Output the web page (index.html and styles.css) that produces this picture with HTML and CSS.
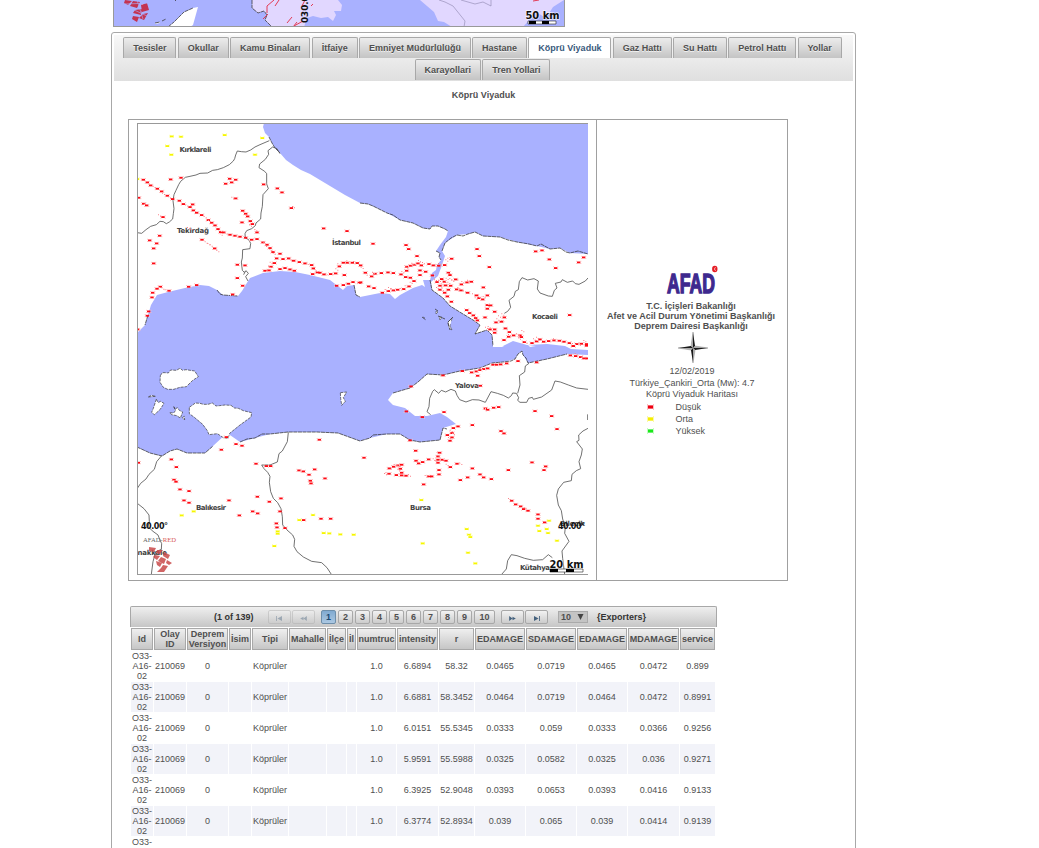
FILE: index.html
```html
<!DOCTYPE html>
<html lang="tr">
<head>
<meta charset="utf-8">
<title>AFAD-RED</title>
<link rel="stylesheet" href="styles.css">
</head>
<body>
<svg class="overview" viewBox="114 0 450 26">
  <rect class="sea" x="113" y="0" width="452" height="27"/>
  <path class="risk" d="M252 0 252 8 258 13 264 11 267 15 265 20 270 25 272 27 304 27 307 18 313 16 321 18 328 17 333 21 336 15 334 11 341 11 342 5 338 0ZM420 0 434 12 438 21 444 22 452 27 523 27 536 12 546 18 553 7 564 0Z"/>
  <path class="land" d="M168 27 174 22 184 12 193 8 198 7 193 25 190 27ZM155 23 160 22 160 23 155 24ZM142 4 146 5 146 10 143 9Z"/>
  <path class="coast" d="M168 27 174 22 184 12 193 8M155 23 160 22M162 21 166 19M175 0 176 1M252 0 252 8 258 13 264 11 267 15 265 20 270 25 272 27"/>
  <path class="thin" d="M439 0 445 2 453 6 465 21 464 27M461 0 475 4 483 2 491 6 491 0"/>
  <path class="fault" d="M274 0 267 6 267 13M268 14 263 19M287 23 292 17M294 26 303 21M305 0 302 6M311 6 313 4M279 0 275 6M533 1 539 0M297 22 293 27" />
  <g class="emblem"><path d="M125 0 132 1 128 5 124 3ZM133 1 140 2 137 8 130 6ZM141 5 147 3 149 10 142 12ZM135 10 142 9 141 15 133 13ZM143 14 148 13 144 20 139 18ZM133 16 139 17 137 22 132 19Z"/></g>
  <path class="gridline" d="M125 4 150 3M132 9 147 16M137 0 143 19"/>
  <text class="axis" transform="translate(308 23) rotate(-90)" textLength="38" lengthAdjust="spacingAndGlyphs">030.00°</text>
  <text class="scale" x="525.500" y="19" textLength="34" lengthAdjust="spacingAndGlyphs">50 km</text>
  <path class="bar" d="M528 21h28v3h-28z"/><path class="barfill" d="M529 21h7v3h-7zM542 21h7v3h-7z"/>
</svg>

<main class="panel">
  <nav class="tabs">
    <div class="tabrow">
      <a class="tab">Tesisler</a><a class="tab">Okullar</a><a class="tab">Kamu Binaları</a><a class="tab">İtfaiye</a><a class="tab">Emniyet Müdürlülüğü</a><a class="tab">Hastane</a><a class="tab active">Köprü Viyaduk</a><a class="tab">Gaz Hattı</a><a class="tab">Su Hattı</a><a class="tab">Petrol Hattı</a><a class="tab">Yollar</a>
    </div>
    <div class="tabrow">
      <a class="tab">Karayollari</a><a class="tab">Tren Yollari</a>
    </div>
  </nav>
  <h1 class="heading">Köprü Viyaduk</h1>

  <section class="report">
    <div class="mapcell">
      <svg class="map" viewBox="138 124 450 450">
        <defs>
          <marker id="red" markerUnits="userSpaceOnUse" markerWidth="18" markerHeight="12" refX="9" refY="6"><path fill="#ffc4c4" d="M1 1h3v3h-3zM14 1h3v3h-3zM1 8h3v3h-3zM14 8h3v3h-3z"/><rect x="4" y="3.500" width="10" height="5.500" fill="#ff0a14"/></marker>
          <marker id="dots" markerUnits="userSpaceOnUse" markerWidth="18" markerHeight="12" refX="9" refY="6"><path fill="#fb8088" d="M3 2h3v3h-3zM9 6h3v3h-3z"/></marker>
          <marker id="yel" markerUnits="userSpaceOnUse" markerWidth="18" markerHeight="12" refX="9" refY="6"><path fill="#ffffa0" d="M2 1h3v9h-3zM13 1h3v9h-3z"/><rect x="4" y="3.500" width="10" height="5.500" fill="#f6f600"/></marker>
        </defs>
        <rect class="land" x="137" y="123" width="451" height="452"/>
        <path class="sea" d="M264 123 263 127 265 133 269 137 272 143 275 148 280 153 286 160 293 165 301 170 310 174 320 180 330 186 345 195 360 203 368 204 377 208 387 213 400 220 413 223 423 228 430 229 432 226 438 226 445 229 448 231 446 237 440 245 436 251 440 253 439 257 441 260 437 265 436 270 432 273 430 280 423 280 425 287 422 285 413 288 400 295 395 299 390 294 380 293 360 297 356 295 354 285 347 286 343 290 330 280 310 275 295 272 280 271 263 273 250 278 245 286 242 291 238 296 223 295 217 290 209 286 200 285 185 288 168 292 157 295 151 305 148 315 145 325 137 333V447L150 453 162 456 170 451 177 449 187 453 205 453 213 446 227 433 240 442 255 438 270 434 288 432 317 432 338 433 349 437 360 441 370 438 387 434 400 434 410 440 420 442 440 440 443 428 456 424 447 417 440 413 427 416 415 416 405 408 393 405 388 400 393 393 410 388 418 382 427 374 443 375 460 371 480 368 492 363 503 362 515 359 518 354 522 351 523 355 528 363 547 359 567 354 588 355V350L571 349 565 346 547 344 527 345 513 341 503 346 493 346 492 335 487 330 475 334 480 325 473 320 463 314 450 306 443 298 432 290 431 282 438 276 442 265 445 256 442 251 445 243 457 235 468 234 475 232 483 236 500 237 517 242 537 246 550 249 560 248 570 253 588 254V123Z"/>
        <path class="coast" d="M269 137 272 143 275 148 280 153M360 203 368 204 373 206 377 208 381 210 387 213 393 215 400 220 413 223 423 228 430 229 432 226 438 226 445 229 448 231M436 251 440 253 439 257 441 260M354 285 356 295 360 297M430 280 432 290 443 298 450 306 463 314 473 320 480 325 475 334 487 330 492 335 493 346M442 251 445 243 451 238 457 235 463 236 468 234 475 232 483 236 500 237 508 240 517 242 529 244 537 246 541 244 550 249 560 248 566 252 570 253 578 251 588 254M137 447 150 453 162 456 170 451 177 449 187 453 205 453 213 446M240 442 247 439 255 438 262 434 270 434 288 432 317 432 338 433 349 437 360 441 370 438 373 435 387 434 400 434 410 440 420 442 440 440 443 428 447 429M393 393 410 388 418 382 427 374 443 375 460 371 480 368 492 363 503 362 511 361 515 359 518 354 522 351 523 355 526 358 528 363 547 359 567 354M217 290 220 294 223 295 238 296M148 315 145 325"/>
        <g transform="translate(130 345) scale(.33333)">
          <path class="island" d="M91 92 97 83 105 83 115 84 122 75 139 76 150 70 158 76 168 74 194 78 205 95 187 107 169 125 150 127 131 133 113 133 100 127 90 112ZM79 163 85 173 91 169 102 175 90 194 73 209 65 202 70 190ZM131 184 135 193 142 188 148 196 158 201 151 219 140 212 125 209 119 203 131 204 137 196ZM178 187 185 182 196 174 210 175 220 178 234 178 247 174 258 183 268 182 285 180 303 181 313 189 325 190 340 197 365 203 363 216 330 240 299 265 294 280 280 278 262 266 237 269 232 257 218 238 193 217 178 206ZM631 143 650 141 640 158 646 169 635 181 632 160ZM55 156 64 151 77 154 64 155ZM157 218 163 214 164 225Z"/>
        </g>
        <path class="island" d="M423 317 425 318M436 311 438 312 436 314ZM439 317 442 317 440 320ZM448 322 452 318 450 326 452 330 449 328Z"/>
        <path class="land" d="M493 345 500 345 504 347 493 347ZM528 345 536 346 530 347Z"/>
        <path class="coast" d="M435 309 438 311M438 316 445 319M448 322 453 317M448 323 450 330M422 317 426 320"/>

        <g class="borders">
          <path transform="translate(130 118) scale(.33333)" d="M418 68 390 80 375 87 362 96 348 102 334 101 322 99 317 111 314 122 310 129 298 140 280 149 262 155 248 157 233 165 210 166 198 171 180 175 166 178 152 190 146 200 138 217 132 230 129 248 132 272 130 287 128 303 118 312 109 317 100 311 90 310 79 320 62 325 48 335 35 346 22 344M428 87 414 98 416 109 406 124 389 138 387 149 404 160 410 167 410 198 415 212 399 230 397 265 393 285 392 303 378 315 376 323 365 332 350 338 345 347 346 360 356 365 362 376 360 392 338 395 337 420 334 432 337 457 343 463 348 458 355 466 347 476 354 489M428 87 441 92 450 107M346 460 341 470"/>
          <path transform="translate(130 345) scale(.33333)" d="M22 430 32 415 48 402 57 388 73 373 80 350 95 332M22 475 42 491 57 510 58 530 54 545 69 559 84 570 89 583 95 596 94 613 77 621 69 650 64 688M475 262 472 290 457 318 447 326 442 351 420 360 395 360 402 371 413 382 420 394 418 412 422 440 430 460 443 473 453 491 457 515 458 540 471 555 488 570 494 583 492 604 501 620 520 636 545 649 575 653 591 668 604 688"/>
          <path transform="translate(360 118) scale(.33333)" d="M684 480 676 489 657 499 646 497 638 489 622 493 607 485 603 492 586 496 591 510 583 517 577 535 565 534 540 525 532 513 535 489 522 482 503 486 486 479 478 491 475 515 466 520 462 535 447 547 452 568 443 580 433 586"/>
          <path transform="translate(360 345) scale(.33333)" d="M212 209 201 200 207 185 209 160 218 139 223 134 236 145 244 136 257 141 273 133 286 138 291 151 299 164 318 171 337 164 357 165 376 172 393 140 412 145 430 151 445 159 454 152 458 144 469 145 476 158 473 166 480 172 500 172 506 160 517 157 520 163 545 156 575 135 585 108 601 111 625 120 650 129 684 133M473 145 480 120 478 92 494 81 496 63 507 55M684 250 669 258 656 270 657 286 650 290 667 312 664 330 657 350 662 371 649 377 636 388 634 407 611 412 595 432 590 451 595 480 604 497 608 522 616 547 614 565 627 589 606 618 608 640 614 688M425 688 439 672 443 647 454 629 471 632 494 640 520 646 548 644 565 629 577 638M683 208V225"/>
        </g>

        <g class="labels">
          <text x="179.500" y="152" textLength="32">Kırklareli</text><text x="177" y="233" textLength="32">Tekirdağ</text><text x="332" y="245" textLength="29">İstanbul</text><text x="532" y="319" textLength="26">Kocaeli</text><text x="455" y="388" textLength="24">Yalova</text><text x="196" y="510" textLength="30">Balıkesir</text><text x="410" y="510" textLength="21">Bursa</text><text x="520" y="570" textLength="30">Kütahya</text><text x="560" y="526" textLength="25">Bilecik</text><text x="128" y="555" textLength="39">Çanakkale</text>
          <text class="deg" x="141" y="529" textLength="27">40.00°</text><text class="deg" x="558" y="529" textLength="27">40.00°</text>
        </g>
        <g class="dots">
          <polyline points="40 185 52 193 62 202 82 212 95 220 112 233 128 243 148 248 160 258 180 267 190 277 200 284 215 291 235 306 245 314 255 322 264 333 272 342 281 343 300 350 315 353 330 356 347 359 365 365 381 363 399 373 411 380 420 390 429 402 440 421 433 435 423 446 405 458 417 457 459 423 476 421 491 428 508 432 525 436 545 441 550 451 562 463 570 464 582 469 602 468 617 466 628 445 640 434 652 434 667 434 682 435" transform="translate(130 118) scale(.33333)"/>
          <polyline transform="translate(130 118) scale(.33333)" points="122 184 153 179 188 259 299 182 317 185 305 193 287 197 401 199 442 211 456 223 484 270 26 239 41 257 50 262 99 297 317 241 338 278 347 287 353 295 361 309 367 318 336 313 381 343 89 353 59 367 80 376 71 391 71 436 216 365 254 391 322 440 345 442 322 480 338 503 308 529 200 501 176 506 91 506 81 512 68 524 66 538 117 518 56 580 52 593 450 407 450 453 465 450 480 454 493 458 548 468 581 331 651 339 643 471 620 503 640 501 655 497 669 492 688 494 23 634"/>
          <polyline transform="translate(360 118) scale(.33333)" points="39 377 138 381 146 393 171 414 2 442 16 464 35 475 45 467 64 465 84 463 100 465 123 469 140 458 140 446 152 443 163 440 174 436 184 442 207 438 220 442 236 443 254 441 275 422 180 457 197 461 180 471 137 477 151 479 162 489 147 505 131 513 113 515 100 517 85 519 67 524 2 493 26 505 42 510 217 472 231 492 240 503 245 483 253 491 257 502 272 503 265 515 240 515 254 524 262 535 274 551 265 464 270 471 287 484 304 499 321 493 334 491 290 514 303 517 323 524 350 532 357 540 368 544 382 532 370 508 351 393 358 414 388 447 527 400 546 397 568 424 587 450 656 433 671 418 382 561 392 562 382 572 404 581 375 598 320 576 329 585 340 592 347 600 352 607 408 613 424 611 433 598 436 631 448 642 446 656 461 652 480 652 484 657 404 634 404 644 390 634 432 666 493 672 516 675 530 670 540 664 551 671 566 669 582 667 598 668 612 671 628 675 640 684 650 678 664 677 680 678 629 591"/>
          <polyline transform="translate(130 345) scale(.33333)" points="289 276 318 297 336 302 274 314 568 284 124 343 139 366 132 404 138 410 150 433 177 438 162 466 177 473 297 466 328 511 378 356 409 363 422 363 507 376 520 379 537 389 554 373 585 400 541 407 543 415 382 455 418 470 453 460 368 499 383 505 450 499 439 535 441 547 465 549 521 525 573 521 602 521 25 353"/>
          <polyline transform="translate(360 345) scale(.33333)" points="12 338 150 286 153 124 249 91 307 78 335 82 349 79 353 92 360 75 371 72 383 70 399 59 410 59 422 58 440 55 474 48 530 52 631 31 647 33 662 36 672 40 681 40 640 3 680 2 139 199 187 216 252 201 361 122 376 190 383 194 401 188 416 186 525 198 575 213 591 252 337 240 423 258 432 265 294 244 280 249 276 264 262 270 276 277 270 287 167 317 239 323 168 347 176 355 188 351 206 343 234 334 234 344 234 353 247 344 258 347 271 366 291 356 237 375 237 388 206 394 215 394 191 418 88 370 101 365 114 361 125 359 121 371 125 383 87 386 109 390 125 391 138 392 337 370 360 388 371 397 323 397 301 405 394 402 445 375 516 352 557 364 552 375 455 467 467 478 482 484 491 492 504 497 534 508 534 521 554 532"/>
        </g>
        <g class="haze">
          <polyline transform="translate(130 118) scale(.33333)" points="74 207 102 228 120 239 172 263 177 331 185 333 230 374 238 379 245 383 265 400 227 298 240 310 275 350 290 347 323 356 405 377 414 388 424 396 434 408 425 435 420 447 482 426 535 438 557 457 590 469 622 455 628 440 655 431 675 433 492 268 310 240 363 323 379 337 100 512 110 518 90 293"/>
          <polyline transform="translate(360 118) scale(.33333)" points="8 450 20 470 42 465 130 463 142 449 160 438 180 430 192 436 230 444 240 439 262 428 268 423 80 517 90 511 98 514 125 514 140 506 155 495 228 486 240 489 248 500 255 488 263 483 268 495 244 508 249 517 234 511 274 484 280 489 292 484 310 493 327 489 298 511 315 521 342 530 350 542 363 541 374 538 381 630 389 628 415 605 420 596 430 590 430 610 440 631 450 652 474 650 490 640 480 662 500 674 525 665 534 660 585 665 636 675 660 680 676 670"/>
          <polyline transform="translate(360 345) scale(.33333)" points="78 388 82 386 92 370 107 361 118 363 118 375 130 391 150 392 224 344 236 334 236 325 229 349 200 394 263 360 304 357 275 258 282 268 270 280 378 196 650 28 672 36 366 72 450 463 497 490"/>
        </g>
        <g class="yellows">
          <polyline transform="translate(130 118) scale(.33333)" points="125 55 153 56 112 84 124 110 284 51 397 60 375 110 22 183"/>
          <polyline transform="translate(130 345) scale(.33333)" points="155 511 191 499 443 559 443 566 433 603 508 525 549 510 581 564 598 565 631 568 671 569"/>
          <polyline transform="translate(360 345) scale(.33333)" points="184 465 188 595 320 552 327 569 331 576 324 623 346 655 534 542 538 558 560 552 564 564 567 527 591 587"/>
        </g>
        <text class="brand" x="143" y="542" textLength="33" lengthAdjust="spacingAndGlyphs">AFAD-<tspan class="hot">RED</tspan></text>
        <g class="emblem pale"><path d="M149 547 156 548 154 552 149 551ZM157 550 163 550 160 554 156 553ZM164 552 170 555 168 559 163 556ZM155 555 160 556 157 560 153 557ZM161 557 166 559 164 564 158 561ZM167 560 172 563 169 565 166 563ZM156 561 162 563 160 567 157 565ZM163 565 168 566 164 572 157 572 161 568Z"/></g>
        <text class="scale" x="549.500" y="567.500" textLength="34" lengthAdjust="spacingAndGlyphs">20 km</text>
        <path class="bar" d="M550 569h33v3h-33z"/><path class="barfill" d="M550 569h8v3h-8zM566 569h8v3h-8z"/>
      </svg>
    </div>
    <div class="legend">
      <svg class="logo" viewBox="0 0 54 30">
        <text x="2" y="28" textLength="48" lengthAdjust="spacingAndGlyphs">AFAD</text>
        <ellipse cx="49.800" cy="4" rx="2.700" ry="3.300"/><path d="M50.800 2.500a1.300 1.500 0 1 0 0 3" fill="none" stroke="#fff" stroke-width=".6"/>
      </svg>
      <p class="agency">T.C. İçişleri Bakanlığı<br>Afet ve Acil Durum Yönetimi Başkanlığı<br>Deprem Dairesi Başkanlığı</p>
      <svg class="compass" viewBox="0 0 32 32">
        <path fill="#111" d="M16 0 18 14 16 16ZM31 16 18 18 16 16ZM16 31 14 18 16 16ZM1 16 14 14 16 16Z"/>
        <path fill="#bbb" stroke="#555" stroke-width=".3" d="M16 0 14 14 16 16ZM31 16 18 14 16 16ZM16 31 18 18 16 16ZM1 16 14 18 16 16Z"/>
      </svg>
      <p class="info">12/02/2019</p>
      <p class="info">Türkiye_Çankiri_Orta (Mw): 4.7</p>
      <p class="info">Köprü Viyaduk Haritası</p>
      <ul class="keys">
        <li><svg class="key low" viewBox="0 0 7 6"><path d="M0 0h1v1h-1zM6 0h1v1h-1zM0 1h7v4h-7zM0 5h1v1h-1zM6 5h1v1h-1z" opacity=".25"/><path d="M1 1.500h5v3h-5z"/></svg>Düşük</li>
        <li><svg class="key mid" viewBox="0 0 7 6"><path d="M0 0h1v1h-1zM6 0h1v1h-1zM0 1h7v4h-7zM0 5h1v1h-1zM6 5h1v1h-1z" opacity=".35"/><path d="M1 1.500h5v3h-5z"/></svg>Orta</li>
        <li><svg class="key high" viewBox="0 0 7 6"><path d="M0 0h1v1h-1zM6 0h1v1h-1zM0 1h7v4h-7zM0 5h1v1h-1zM6 5h1v1h-1z" opacity=".25"/><path d="M1 1.500h5v3h-5z"/></svg>Yüksek</li>
      </ul>
    </div>
  </section>

  <section class="data">
    <div class="pager">
      <span class="count">(1 of 139)</span>
      <span class="btn nav off"><svg viewBox="0 0 8 6"><path d="M0 0h1v6h-1zM7 0v6L1.500 3z"/></svg></span>
      <span class="btn nav off"><svg viewBox="0 0 8 6"><path d="M4 1v4L0 3zM8 0v6L4 3z"/></svg></span>
      <span class="pages"><b class="btn on">1</b><b class="btn">2</b><b class="btn">3</b><b class="btn">4</b><b class="btn">5</b><b class="btn">6</b><b class="btn">7</b><b class="btn">8</b><b class="btn">9</b><b class="btn ten">10</b></span>
      <span class="btn nav"><svg viewBox="0 0 8 6"><path d="M0 0v6L4 3zM4 1v4L8 3z"/></svg></span>
      <span class="btn nav"><svg viewBox="0 0 8 6"><path d="M7 0h1v6h-1zM1 0v6L6.500 3z"/></svg></span>
      <span class="size">10 <svg viewBox="0 0 7 7"><path d="M0 0h7L3.500 7z"/></svg></span>
      <span class="export">{Exporters}</span>
    </div>
    <table>
      <colgroup><col class="w22"><col class="w32"><col class="w41"><col class="w22"><col class="w36"><col class="w37"><col class="w19"><col class="w9"><col class="w39"><col class="w41"><col class="w35"><col class="w50"><col class="w50"><col class="w50"><col class="w51"><col class="w35"></colgroup>
      <thead><tr><th>Id</th><th>Olay ID</th><th>Deprem Versiyon</th><th>İsim</th><th>Tipi</th><th>Mahalle</th><th>İlçe</th><th>İl</th><th>numtruc</th><th>intensity</th><th>r</th><th>EDAMAGE</th><th>SDAMAGE</th><th>EDAMAGE</th><th>MDAMAGE</th><th>service</th></tr></thead>
      <tbody>
        <tr><td>O33-A16-02</td><td>210069</td><td>0</td><td></td><td>Köprüler</td><td></td><td></td><td></td><td>1.0</td><td>6.6894</td><td>58.32</td><td>0.0465</td><td>0.0719</td><td>0.0465</td><td>0.0472</td><td>0.899</td></tr>
        <tr><td>O33-A16-02</td><td>210069</td><td>0</td><td></td><td>Köprüler</td><td></td><td></td><td></td><td>1.0</td><td>6.6881</td><td>58.3452</td><td>0.0464</td><td>0.0719</td><td>0.0464</td><td>0.0472</td><td>0.8991</td></tr>
        <tr><td>O33-A16-02</td><td>210069</td><td>0</td><td></td><td>Köprüler</td><td></td><td></td><td></td><td>1.0</td><td>6.0151</td><td>55.5345</td><td>0.0333</td><td>0.059</td><td>0.0333</td><td>0.0366</td><td>0.9256</td></tr>
        <tr><td>O33-A16-02</td><td>210069</td><td>0</td><td></td><td>Köprüler</td><td></td><td></td><td></td><td>1.0</td><td>5.9591</td><td>55.5988</td><td>0.0325</td><td>0.0582</td><td>0.0325</td><td>0.036</td><td>0.9271</td></tr>
        <tr><td>O33-A16-02</td><td>210069</td><td>0</td><td></td><td>Köprüler</td><td></td><td></td><td></td><td>1.0</td><td>6.3925</td><td>52.9048</td><td>0.0393</td><td>0.0653</td><td>0.0393</td><td>0.0416</td><td>0.9133</td></tr>
        <tr><td>O33-A16-02</td><td>210069</td><td>0</td><td></td><td>Köprüler</td><td></td><td></td><td></td><td>1.0</td><td>6.3774</td><td>52.8934</td><td>0.039</td><td>0.065</td><td>0.039</td><td>0.0414</td><td>0.9139</td></tr>
        <tr><td>O33-</td><td></td><td></td><td></td><td></td><td></td><td></td><td></td><td></td><td></td><td></td><td></td><td></td><td></td><td></td><td></td></tr>
      </tbody>
    </table>
  </section>
</main>
</body>
</html>
```

FILE: styles.css
```css
* { box-sizing: border-box; }
html { height: 848px; overflow: hidden; }
body {
  margin: 0;
  height: 848px;
  overflow: hidden;
  background: #fff;
  color: #4f4f4f;
  font: 9px/10px "Liberation Sans", Arial, sans-serif;
}
svg { display: block; }

.overview {
  width: 452px;
  height: 27px;
  margin-left: 113px;
  border: 1px solid #999;
  border-top: 0;
}
.sea { fill: #a9b1ff; }
.land { fill: #fff; }
.risk { fill: #e1d7ff; }
.coast { fill: none; stroke: #333; stroke-width: .75; stroke-dasharray: 4 .6; }
.borders path { fill: none; stroke: #4c4c4c; stroke-width: 2.4; }
.thin { fill: none; stroke: #8c84ac; stroke-width: .6; }
.fault { fill: none; stroke: #e23b55; stroke-width: 1; }
.island { fill: #fff; stroke: #333; stroke-width: 2; stroke-dasharray: 9 3; }
.map > .island { stroke-width: .5; }
.emblem { fill: #c33452; }
.emblem.pale { fill: #c94a4a; opacity: .85; }
.gridline { fill: none; stroke: #a9b1ff; stroke-width: .6; }
.axis { font: bold 9px "DejaVu Sans", sans-serif; fill: #111; }
.scale { font: bold 10px "DejaVu Sans", sans-serif; fill: #111; stroke: rgba(255, 255, 255, .7); stroke-width: 1.5px; paint-order: stroke; }
.bar { fill: #fff; stroke: #222; stroke-width: .6; }
.barfill { fill: #000; }

.panel {
  width: 745px;
  height: 830px;
  margin: 5px 0 0 111px;
  padding: 2px;
  border: 1px solid #a8a8a8;
  border-radius: 3px;
}
.tabs {
  height: 46px;
  padding-top: 2px;
  background: linear-gradient(#f8f8f8, #dfdfdf);
}
.tabrow { display: flex; justify-content: center; gap: 1.600px; height: 22px; padding-right: 2px; }
.tab {
  height: 21px;
  padding: 0 8.800px;
  border: 1px solid #a8a8a8;
  border-bottom: 0;
  border-radius: 2px 2px 0 0;
  background: linear-gradient(#ececec, #c4c4c4);
  font-weight: bold;
  line-height: 20px;
  white-space: nowrap;
  text-shadow: 0 1px 0 rgba(255, 255, 255, .7);
}
.tab.active { background: #fff; color: #3a5a7c; }
.heading { margin: 9px 0 0; font-size: 9px; line-height: 10px; text-align: center; }

.report {
  display: flex;
  width: 660px;
  height: 462px;
  margin: 19px 0 0 14px;
  border: 1px solid #a0a0a0;
}
.mapcell { width: 468px; padding: 3px 0 0 8px; border-right: 1px solid #a0a0a0; }
.map { width: 451px; height: 452px; border: 1px solid #999; border-right: 0; }
.labels text { font: bold 7px "DejaVu Sans", sans-serif; fill: #444; }
.labels .deg { font-size: 8px; fill: #111; }
.brand { font: 6.500px "Liberation Serif", serif; fill: #666; }
.hot { fill: #d85858; }
.dots polyline, .haze polyline, .yellows polyline { fill: none; stroke: none; }
.dots polyline { marker: url(#red); }
.haze polyline { marker: url(#dots); }
.yellows polyline { marker: url(#yel); }

.legend { flex: 1; display: flex; flex-direction: column; align-items: center; padding-top: 145px; }
.logo { width: 54px; height: 30px; overflow: visible; }
.logo text { font: bold 28px "Liberation Sans", sans-serif; fill: #3e298e; stroke: #3e298e; stroke-width: 1.5px; }
.logo ellipse { fill: #e51c24; }
.agency { margin: 6px 2px 0 0; font-weight: bold; text-align: center; white-space: nowrap; }
.compass { width: 32px; height: 32px; margin: 1px 0 2px 1px; }
.info { margin: 0; height: 11.700px; line-height: 11.700px; }
.keys { width: 91px; margin: 0; padding: 0; list-style: none; }
.keys li { display: flex; align-items: center; gap: 22px; height: 12px; line-height: 12px; }
.key { width: 7px; height: 6px; }
.low { fill: #ef0010; }
.mid { fill: #f5ee00; }
.high { fill: #1be81b; }

.data { width: 587px; margin: 25px 0 0 16px; }
.pager {
  display: flex;
  align-items: center;
  height: 21px;
  padding-left: 83px;
  border: 1px solid #a8a8a8;
  border-bottom: 0;
  border-radius: 2px 2px 0 0;
  background: linear-gradient(#efefef, #c6c6c6);
  font-weight: bold;
}
.count { width: 54px; color: #333; white-space: nowrap; }
.btn {
  display: flex;
  align-items: center;
  justify-content: center;
  width: 15px;
  height: 14px;
  border: 1px solid #a8a8a8;
  border-radius: 2px;
  background: linear-gradient(#f2f2f2, #ccc);
}
.nav { width: 23px; margin-right: 1px; padding-top: 3px; }
.nav svg { width: 9px; height: 5px; fill: #45627e; }
.off { opacity: .4; }
.pages { display: flex; gap: 2px; margin: 0 6px 0 5px; }
.on { background: linear-gradient(#80aad0, #abc8e2); border-color: #6d8eaa; color: #1c4a72; }
.ten { width: 21px; }
.size { display: flex; align-items: center; justify-content: space-between; width: 30px; height: 12px; margin: 0 9px; padding: 0 3px 0 2px; border: 1px solid #aaa; background: #c4c4c4; }
.size svg { width: 7px; height: 6px; fill: #444; }
.export { color: #333; }

table { width: 586px; table-layout: fixed; border-spacing: 1px; border-collapse: separate; }
.w9 { width: 9px; } .w19 { width: 19px; } .w22 { width: 22px; } .w32 { width: 32px; }
.w35 { width: 35px; } .w36 { width: 36px; } .w37 { width: 37px; } .w39 { width: 39px; }
.w41 { width: 41px; } .w50 { width: 50px; } .w51 { width: 51px; }
th, td { padding: 0; text-align: center; }
th { height: 22px; border: 1px solid #a8a8a8; background: linear-gradient(#efefef, #c6c6c6); }
td { height: 30px; }
tbody tr:nth-child(even) td { background: #f2f3f9; }
tbody tr:last-child td { vertical-align: top; }
```
